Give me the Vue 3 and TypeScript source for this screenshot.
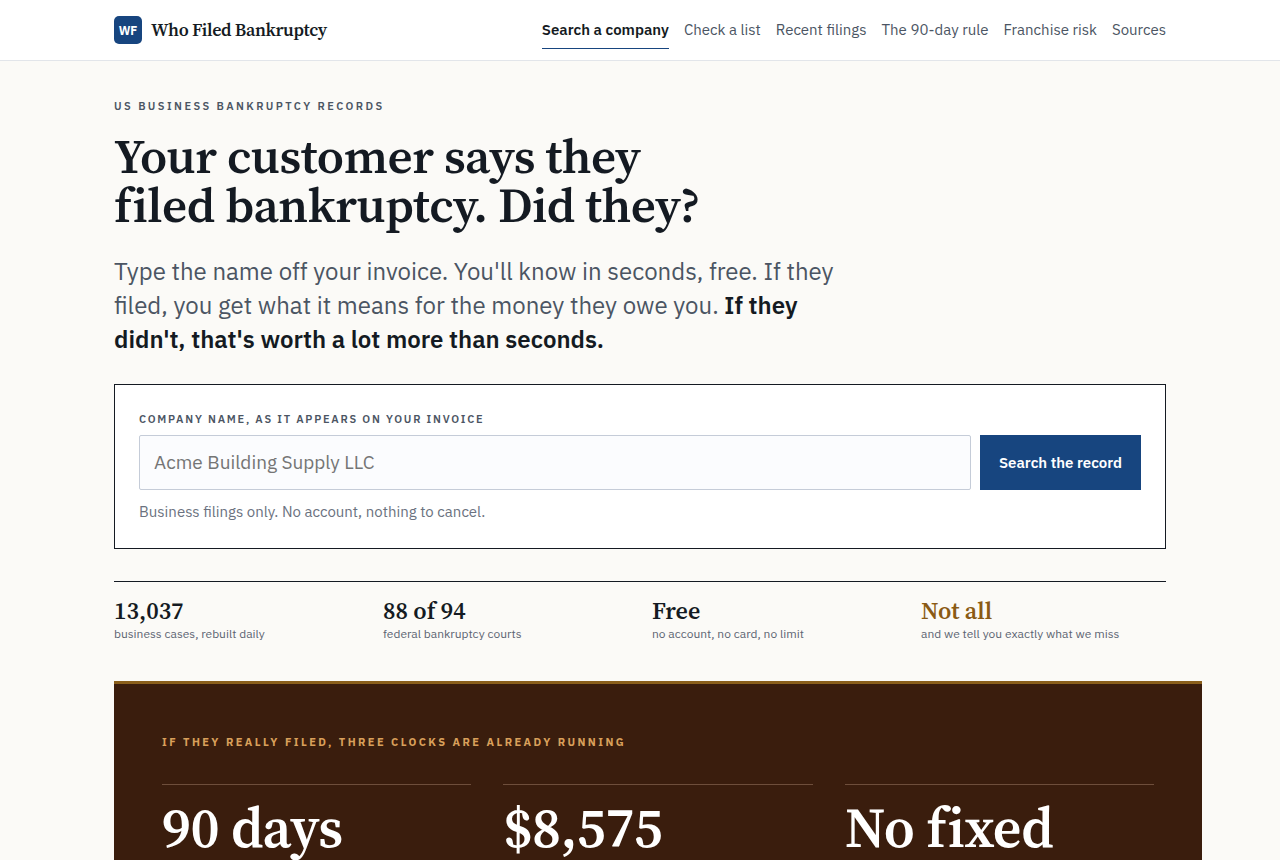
<script setup lang="ts">
import { ref } from 'vue'

interface NavLink { label: string; href: string; current?: boolean }
interface Fact { value: string; note: string; warn?: boolean }

const links: NavLink[] = [
  { label: 'Search a company', href: '#search', current: true },
  { label: 'Check a list', href: '#list' },
  { label: 'Recent filings', href: '#recent' },
  { label: 'The 90-day rule', href: '#rule' },
  { label: 'Franchise risk', href: '#franchise' },
  { label: 'Sources', href: '#sources' },
]

const facts: Fact[] = [
  { value: '13,037', note: 'business cases, rebuilt daily' },
  { value: '88 of 94', note: 'federal bankruptcy courts' },
  { value: 'Free', note: 'no account, no card, no limit' },
  { value: 'Not all', note: 'and we tell you exactly what we miss', warn: true },
]

const clocks: string[] = ['90 days', '$8,575', 'No fixed date']
const company = ref('')
</script>

<template>
  <div class="page">
    <header class="bar">
      <div class="wrap bar-row">
        <a class="brand" href="#">
          <span class="mark">WF</span>
          <span class="name">Who Filed Bankruptcy</span>
        </a>
        <nav class="nav" aria-label="Main">
          <a
            v-for="link in links"
            :key="link.label"
            :href="link.href"
            :class="{ current: link.current }"
            :aria-current="link.current ? 'page' : undefined"
          >{{ link.label }}</a>
        </nav>
      </div>
    </header>

    <main class="wrap main">
      <p class="eyebrow">US business bankruptcy records</p>
      <h1>Your customer says they<br>filed bankruptcy. Did they?</h1>
      <p class="lead">
        Type the name off your invoice. You'll know in seconds, free. If they<br>
        filed, you get what it means for the money they owe you. <strong>If they<br>
        didn't, that's worth a lot more than seconds.</strong>
      </p>

      <form class="search" @submit.prevent>
        <label for="company">Company name, as it appears on your invoice</label>
        <div class="field">
          <input id="company" v-model="company" type="text" placeholder="Acme Building Supply LLC">
          <button type="submit">Search the record</button>
        </div>
        <p class="hint">Business filings only. No account, nothing to cancel.</p>
      </form>

      <dl class="facts">
        <div v-for="fact in facts" :key="fact.value" class="fact">
          <dt :class="{ warn: fact.warn }">{{ fact.value }}</dt>
          <dd>{{ fact.note }}</dd>
        </div>
      </dl>

      <section class="clocks">
        <h2>If they really filed, three clocks are already running</h2>
        <div class="clock-grid">
          <div v-for="clock in clocks" :key="clock" class="clock">{{ clock }}</div>
        </div>
      </section>
    </main>
  </div>
</template>

<style>
body {
  margin: 0;
  background: #fbfaf7;
}
</style>

<style scoped>
.page {
  --serif: 'Source Serif 4', 'Source Serif Pro', 'Liberation Serif', serif;
  --sans: 'IBM Plex Sans', Roboto, sans-serif;
  --ink: #141a22;
  color: var(--ink);
  font-family: var(--sans);
}

.wrap {
  box-sizing: border-box;
  width: 100%;
  max-width: 1100px;
  margin: 0 auto;
  padding: 0 24px;
}

.bar {
  background: #fff;
  border-bottom: 1px solid #e2e5ea;
}

.bar-row {
  display: flex;
  align-items: center;
  justify-content: space-between;
  height: 60px;
}

.brand {
  display: flex;
  align-items: center;
  gap: 9px;
  color: inherit;
  text-decoration: none;
}

.mark {
  display: grid;
  place-items: center;
  width: 28px;
  height: 28px;
  border-radius: 5px;
  background: #17457f;
  color: #fff;
  font-size: 12px;
  font-weight: 700;
}

.name,
h1,
.fact dt,
.clock {
  font-family: var(--serif);
  font-optical-sizing: none;
  font-weight: 600;
}

.name {
  font-size: 18px;
  letter-spacing: -0.02em;
  line-height: 22px;
}

.nav {
  display: flex;
  gap: 15px;
}

.nav a {
  padding: 8px 0;
  border-bottom: 1px solid transparent;
  color: #4b5563;
  font-size: 15px;
  line-height: 20px;
  text-decoration: none;
  white-space: nowrap;
}

.nav .current {
  border-color: #17457f;
  color: var(--ink);
  font-weight: 600;
}

.main {
  padding-top: 36px;
}

.eyebrow,
.search label,
.clocks h2 {
  display: block;
  margin: 0;
  color: #4b5563;
  font-size: 11px;
  font-weight: 600;
  line-height: 18px;
  text-transform: uppercase;
}

.eyebrow,
.clocks h2 {
  letter-spacing: 0.22em;
}

.search label {
  letter-spacing: 0.16em;
}

h1 {
  margin: 16px 0 0;
  font-size: 49px;
  letter-spacing: -0.01em;
  line-height: 49px;
}

.lead {
  margin: 25px 0 0;
  color: #4b5563;
  font-size: 24px;
  line-height: 34px;
}

.lead strong {
  color: var(--ink);
  font-weight: 600;
}

.search {
  margin-top: 28px;
  padding: 25px 24px 24px;
  border: 1px solid var(--ink);
  background: #fff;
}

.field {
  display: flex;
  gap: 9px;
  margin-top: 7px;
}

.field input {
  flex: 1;
  min-width: 0;
  box-sizing: border-box;
  height: 55px;
  padding: 0 14px 2px;
  border: 1px solid #c5ccd8;
  border-radius: 2px;
  background: #fbfcfe;
  color: var(--ink);
  font: 19px var(--sans);
}

.field input::placeholder {
  color: #757575;
}

.field button {
  width: 161px;
  padding: 0;
  border: 0;
  background: #17457f;
  color: #fff;
  font: 600 15px var(--sans);
}

.hint {
  margin: 10px 0 0;
  color: #6b7280;
  font-size: 15px;
  line-height: 24px;
}

.facts {
  display: grid;
  grid-template-columns: repeat(4, 1fr);
  gap: 24px;
  margin: 32px 0 0;
  padding-top: 16px;
  border-top: 1px solid var(--ink);
}

.fact dt {
  font-size: 24px;
  line-height: 26px;
}

.fact .warn {
  color: #8a5a14;
}

.fact dd {
  margin: 0;
  color: #5b6472;
  font-size: 12px;
  line-height: 20px;
}

.clocks {
  margin: 37px -36px 0 0;
  padding: 49px 48px;
  border-top: 3px solid #8a5f1b;
  background: #3a1d0d;
}

.clocks h2 {
  color: #d9a05b;
  font-weight: 700;
}

.clock-grid {
  display: grid;
  grid-template-columns: repeat(3, 1fr);
  gap: 32px;
  margin-top: 33px;
}

.clock {
  padding-top: 15px;
  border-top: 1px solid #6e4e3b;
  color: #fff;
  font-size: 56px;
  letter-spacing: -0.01em;
  line-height: 55px;
}
</style>
